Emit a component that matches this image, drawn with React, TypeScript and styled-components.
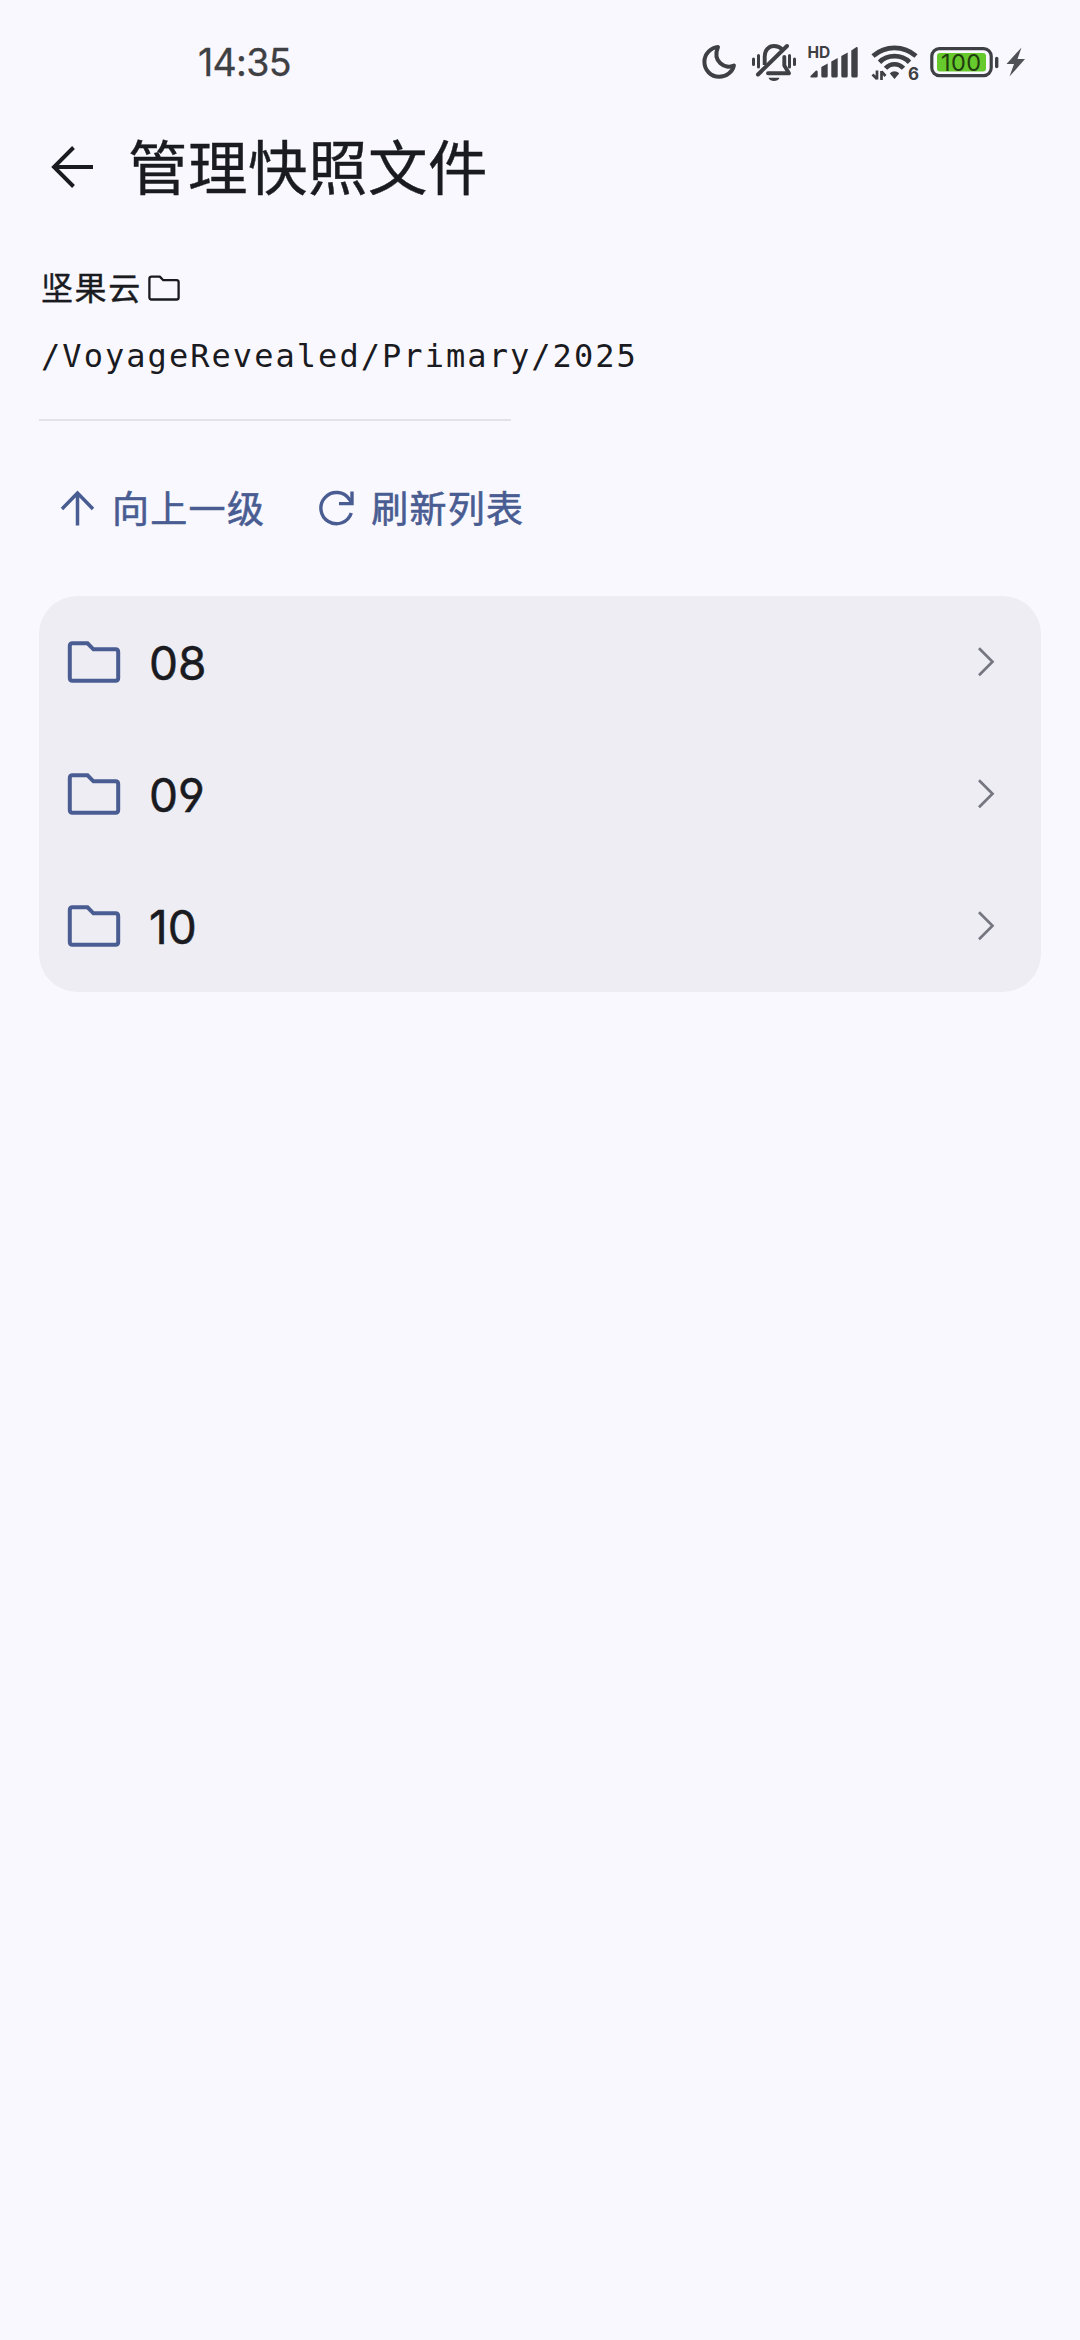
import React from 'react';
import styled, { createGlobalStyle } from 'styled-components';

const ink = '#1a1b21';
const statusInk = '#3f4043';
const accent = '#495d92';
const sans = "Inter, 'Noto Sans CJK SC', sans-serif";

const GlobalStyle = createGlobalStyle`
  body {
    margin: 0;
    background: #faf8ff;
  }
`;

const Screen = styled.div`
  box-sizing: border-box;
  width: 1080px;
  min-height: 2340px;
  display: flex;
  flex-direction: column;
  background: #faf8ff;
  color: ${ink};
  font-family: ${sans};
`;

const StatusBar = styled.div`
  display: flex;
  align-items: center;
  justify-content: space-between;
  height: 124px;
  padding: 0 54px 0 198px;
  color: ${statusInk};
`;

const Clock = styled.span`
  padding-top: 2px;
  font-size: 37.5px;
  line-height: 48px;
  letter-spacing: -0.7px;
  -webkit-text-stroke: 0.3px currentColor;
`;

const StatusIcons = styled.div`
  display: flex;
  align-items: center;
`;

const Glyph = styled.svg<{ $gap?: number }>`
  display: block;
  flex: none;
  margin-left: ${(p) => p.$gap ?? 0}px;
  overflow: visible;
`;

const AppBar = styled.header`
  display: flex;
  align-items: center;
  height: 86px;
  padding-left: 48px;
`;

const Title = styled.h1`
  margin: -6px 0 0 32px;
  font-family: 'Noto Sans CJK SC', sans-serif;
  font-size: 59.5px;
  font-weight: 400;
  line-height: 86px;
  letter-spacing: 0.5px;
  -webkit-text-stroke: 0.4px currentColor;
`;

const Location = styled.section`
  display: flex;
  flex-direction: column;
  padding: 54px 39px 0;
`;

const Provider = styled.div`
  display: flex;
  align-items: center;
  gap: 6px;
  height: 48px;
  padding-left: 2px;
  font-family: 'Noto Sans CJK SC', sans-serif;
  font-size: 32px;
  line-height: 48px;
  letter-spacing: 1.6px;
`;

const ProviderName = styled.span`
  margin-top: -5px;
  -webkit-text-stroke: 0.4px currentColor;
`;

const Path = styled.div`
  margin-top: 20px;
  padding-left: 2px;
  font-family: 'DejaVu Sans Mono', monospace;
  font-size: 32px;
  line-height: 48px;
  letter-spacing: 2.05px;
`;

const Divider = styled.hr`
  width: 472px;
  height: 2px;
  margin: 39px 0 0;
  border: 0;
  background: #e2e2e9;
`;

const Actions = styled.div`
  display: flex;
  gap: 52px;
  padding: 58px 0 0 58px;
`;

const ActionButton = styled.button`
  display: flex;
  align-items: center;
  gap: 16px;
  height: 60px;
  padding: 0;
  border: 0;
  background: none;
  color: ${accent};
  font-family: 'Noto Sans CJK SC', sans-serif;
  font-size: 37px;
  font-weight: 400;
  line-height: 60px;
  letter-spacing: 1.3px;
`;

const ActionLabel = styled.span`
  margin-top: -5px;
  -webkit-text-stroke: 0.6px currentColor;
`;

const FileList = styled.ul`
  margin: 57px 39px 0;
  padding: 0;
  border-radius: 38px;
  background: #eeedf4;
  list-style: none;
`;

const FileRow = styled.li`
  display: flex;
  align-items: center;
  height: 132px;
  padding: 0 45px 0 27px;
`;

const FileName = styled.span`
  flex: 1;
  margin-left: 27px;
  padding-top: 2px;
  font-size: 46px;
  font-weight: 400;
  line-height: 60px;
  letter-spacing: 0;
  font-feature-settings: 'ss01';
  -webkit-text-stroke: 0.5px currentColor;
`;

const MoonIcon = () => (
  <Glyph width="36" height="36" viewBox="0 0 36 36">
    <path
      d="M16 3C9.500 3.300 2.400 9.500 2.400 17.800C2.400 26.300 9 32.800 17.200 32.800C24.500 32.800 30.500 27.800 31.900 21.500C23 25.800 10 17.500 16 3Z"
      fill="none" stroke={statusInk} strokeWidth="4" strokeLinejoin="round"
    />
  </Glyph>
);

const MutedBellIcon = () => (
  <Glyph $gap={14} width="44" height="38" viewBox="0 0 44 38" fill="none" stroke={statusInk}>
    <path d="M1.500 16V21.500M6.500 12.500V24M37.500 12.500V24M42.500 16V21.500" strokeWidth="3" strokeLinecap="round" />
    <path d="M12.700 22V13.500C12.700 7 16.800 3 22 3C25 3 28 4 30 6.200" strokeWidth="3.900" />
    <path d="M32.300 14V22.500L37 30.300H16" strokeWidth="3.900" strokeLinejoin="round" strokeLinecap="round" />
    <path d="M35 3L6 31.500" strokeWidth="4" strokeLinecap="round" />
    <path d="M16.500 34.700H27.500C26 39 18 39 16.500 34.700Z" fill={statusInk} stroke="none" />
  </Glyph>
);

const SignalIcon = () => (
  <Glyph $gap={12} width="50" height="34" viewBox="0 0 50 34" fill={statusInk}>
    <text x="-0.600" y="12.600" fontFamily="Inter, sans-serif" fontSize="15.500" fontWeight="700">HD</text>
    <path d="M2.500 31L8 25.500Q9.700 25 9.700 27V31Q9.700 32.500 8 32.500H3.500Q1.800 32.500 2.500 31Z" />
    <path d="M13.300 22L19.700 18.500V31Q19.700 32.500 18.200 32.500H14.800Q13.300 32.500 13.300 31Z" />
    <path d="M23.300 16.500L29.700 13V31Q29.700 32.500 28.200 32.500H24.800Q23.300 32.500 23.300 31Z" />
    <path d="M33.300 11L39.700 7.500V31Q39.700 32.500 38.200 32.500H34.800Q33.300 32.500 33.300 31Z" />
    <path d="M43.300 5.500L48.500 2Q49.700 1.700 49.700 3.200V31Q49.700 32.500 48.200 32.500H44.800Q43.300 32.500 43.300 31Z" />
  </Glyph>
);

const WifiIcon = () => (
  <Glyph $gap={13} width="48" height="38" viewBox="0 0 48 38" fill="none" stroke={statusInk}>
    <path d="M2 13C14.500 2.200 32.500 2.200 45 13" strokeWidth="4.800" />
    <path d="M8.500 19.200C16.500 11.200 30.500 11.200 38.500 19.200" strokeWidth="4.800" />
    <path d="M14.500 25.300C19.500 19.800 27.500 19.800 32.500 25.300" strokeWidth="4.600" />
    <path d="M18.800 30.500C21.500 27.500 25.500 27.500 28.200 30.500L23.500 36Z" fill={statusInk} stroke="none" />
    <path d="M6 27.500V36.500M1.500 31.500L6 36M10.500 37V28M10.500 28.500L14.500 33" strokeWidth="2.700" />
    <text x="37" y="37.200" fill={statusInk} stroke="none" fontFamily="Inter, sans-serif" fontSize="17" fontWeight="700">6</text>
  </Glyph>
);

const BatteryIcon = () => (
  <Glyph $gap={11} width="70" height="32" viewBox="0 0 70 32">
    <rect x="1.800" y="2.600" width="59.400" height="27" rx="7.500" fill="none" stroke={statusInk} strokeWidth="3.200" />
    <rect x="7" y="7" width="49" height="18.500" rx="3" fill="#66c92c" />
    <path d="M66.700 12.500V20.500" stroke={statusInk} strokeWidth="3.400" strokeLinecap="round" />
    <text x="31" y="24.800" textAnchor="middle" fill="#213d10" fontFamily="Inter, sans-serif" fontSize="23.500" textLength="40">100</text>
  </Glyph>
);

const BoltIcon = () => (
  <Glyph $gap={6} width="20" height="30" viewBox="0 0 20 30">
    <path d="M15.500 0.500L0.500 17H8L3.500 29.500L19 12H11.500Z" fill="#505154" />
  </Glyph>
);

const BackIcon = () => (
  <Glyph width="48" height="48" viewBox="0 0 48 48">
    <path d="M25.500 4.500L6 24L25.500 43.500M6 24H45" fill="none" stroke={ink} strokeWidth="3.900" />
  </Glyph>
);

const SmallFolderIcon = () => (
  <Glyph width="32" height="28" viewBox="0 0 32 28">
    <path
      d="M3.500 2.600H11.800L15.300 6.200H28.500Q30.600 6.200 30.600 8.300V23.400Q30.600 25.500 28.500 25.500H3.500Q1.400 25.500 1.400 23.400V4.700Q1.400 2.600 3.500 2.600Z"
      fill="none" stroke={ink} strokeWidth="2.300" strokeLinejoin="round"
    />
  </Glyph>
);

const UpIcon = () => (
  <Glyph width="38" height="38" viewBox="0 0 38 38">
    <path d="M4 19L19.500 3L35 19M19.500 3V35.500" fill="none" stroke={accent} strokeWidth="3.500" />
  </Glyph>
);

const RefreshIcon = () => (
  <Glyph width="38" height="38" viewBox="0 0 38 38" fill="none" stroke={accent} strokeWidth="3.400">
    <path d="M34.300 23A15.600 15.600 0 1 1 32.500 9.500L35 13" />
    <path d="M35 1.500V13.600H22" />
  </Glyph>
);

const FolderIcon = () => (
  <Glyph width="56" height="44" viewBox="0 0 56 44">
    <path
      d="M6.500 3.300H21.500L27.500 9.300H49.500Q52.200 9.300 52.200 12V38Q52.200 40.700 49.500 40.700H6.500Q3.800 40.700 3.800 38V6Q3.800 3.300 6.500 3.300Z"
      fill="none" stroke={accent} strokeWidth="4"
    />
  </Glyph>
);

const ChevronIcon = () => (
  <Glyph width="20" height="32" viewBox="0 0 20 32">
    <path d="M3 2.300L16.500 15.800L3 29.300" fill="none" stroke="#757680" strokeWidth="2.700" />
  </Glyph>
);

const folders = ['08', '09', '10'];

export default function App() {
  return (
    <>
      <GlobalStyle />
      <Screen>
        <StatusBar>
          <Clock>14:35</Clock>
          <StatusIcons>
            <MoonIcon />
            <MutedBellIcon />
            <SignalIcon />
            <WifiIcon />
            <BatteryIcon />
            <BoltIcon />
          </StatusIcons>
        </StatusBar>
        <AppBar>
          <BackIcon />
          <Title>管理快照文件</Title>
        </AppBar>
        <Location>
          <Provider>
            <ProviderName>坚果云</ProviderName>
            <SmallFolderIcon />
          </Provider>
          <Path>/VoyageRevealed/Primary/2025</Path>
          <Divider />
        </Location>
        <Actions>
          <ActionButton>
            <UpIcon />
            <ActionLabel>向上一级</ActionLabel>
          </ActionButton>
          <ActionButton>
            <RefreshIcon />
            <ActionLabel>刷新列表</ActionLabel>
          </ActionButton>
        </Actions>
        <FileList>
          {folders.map((name) => (
            <FileRow key={name}>
              <FolderIcon />
              <FileName>{name}</FileName>
              <ChevronIcon />
            </FileRow>
          ))}
        </FileList>
      </Screen>
    </>
  );
}
